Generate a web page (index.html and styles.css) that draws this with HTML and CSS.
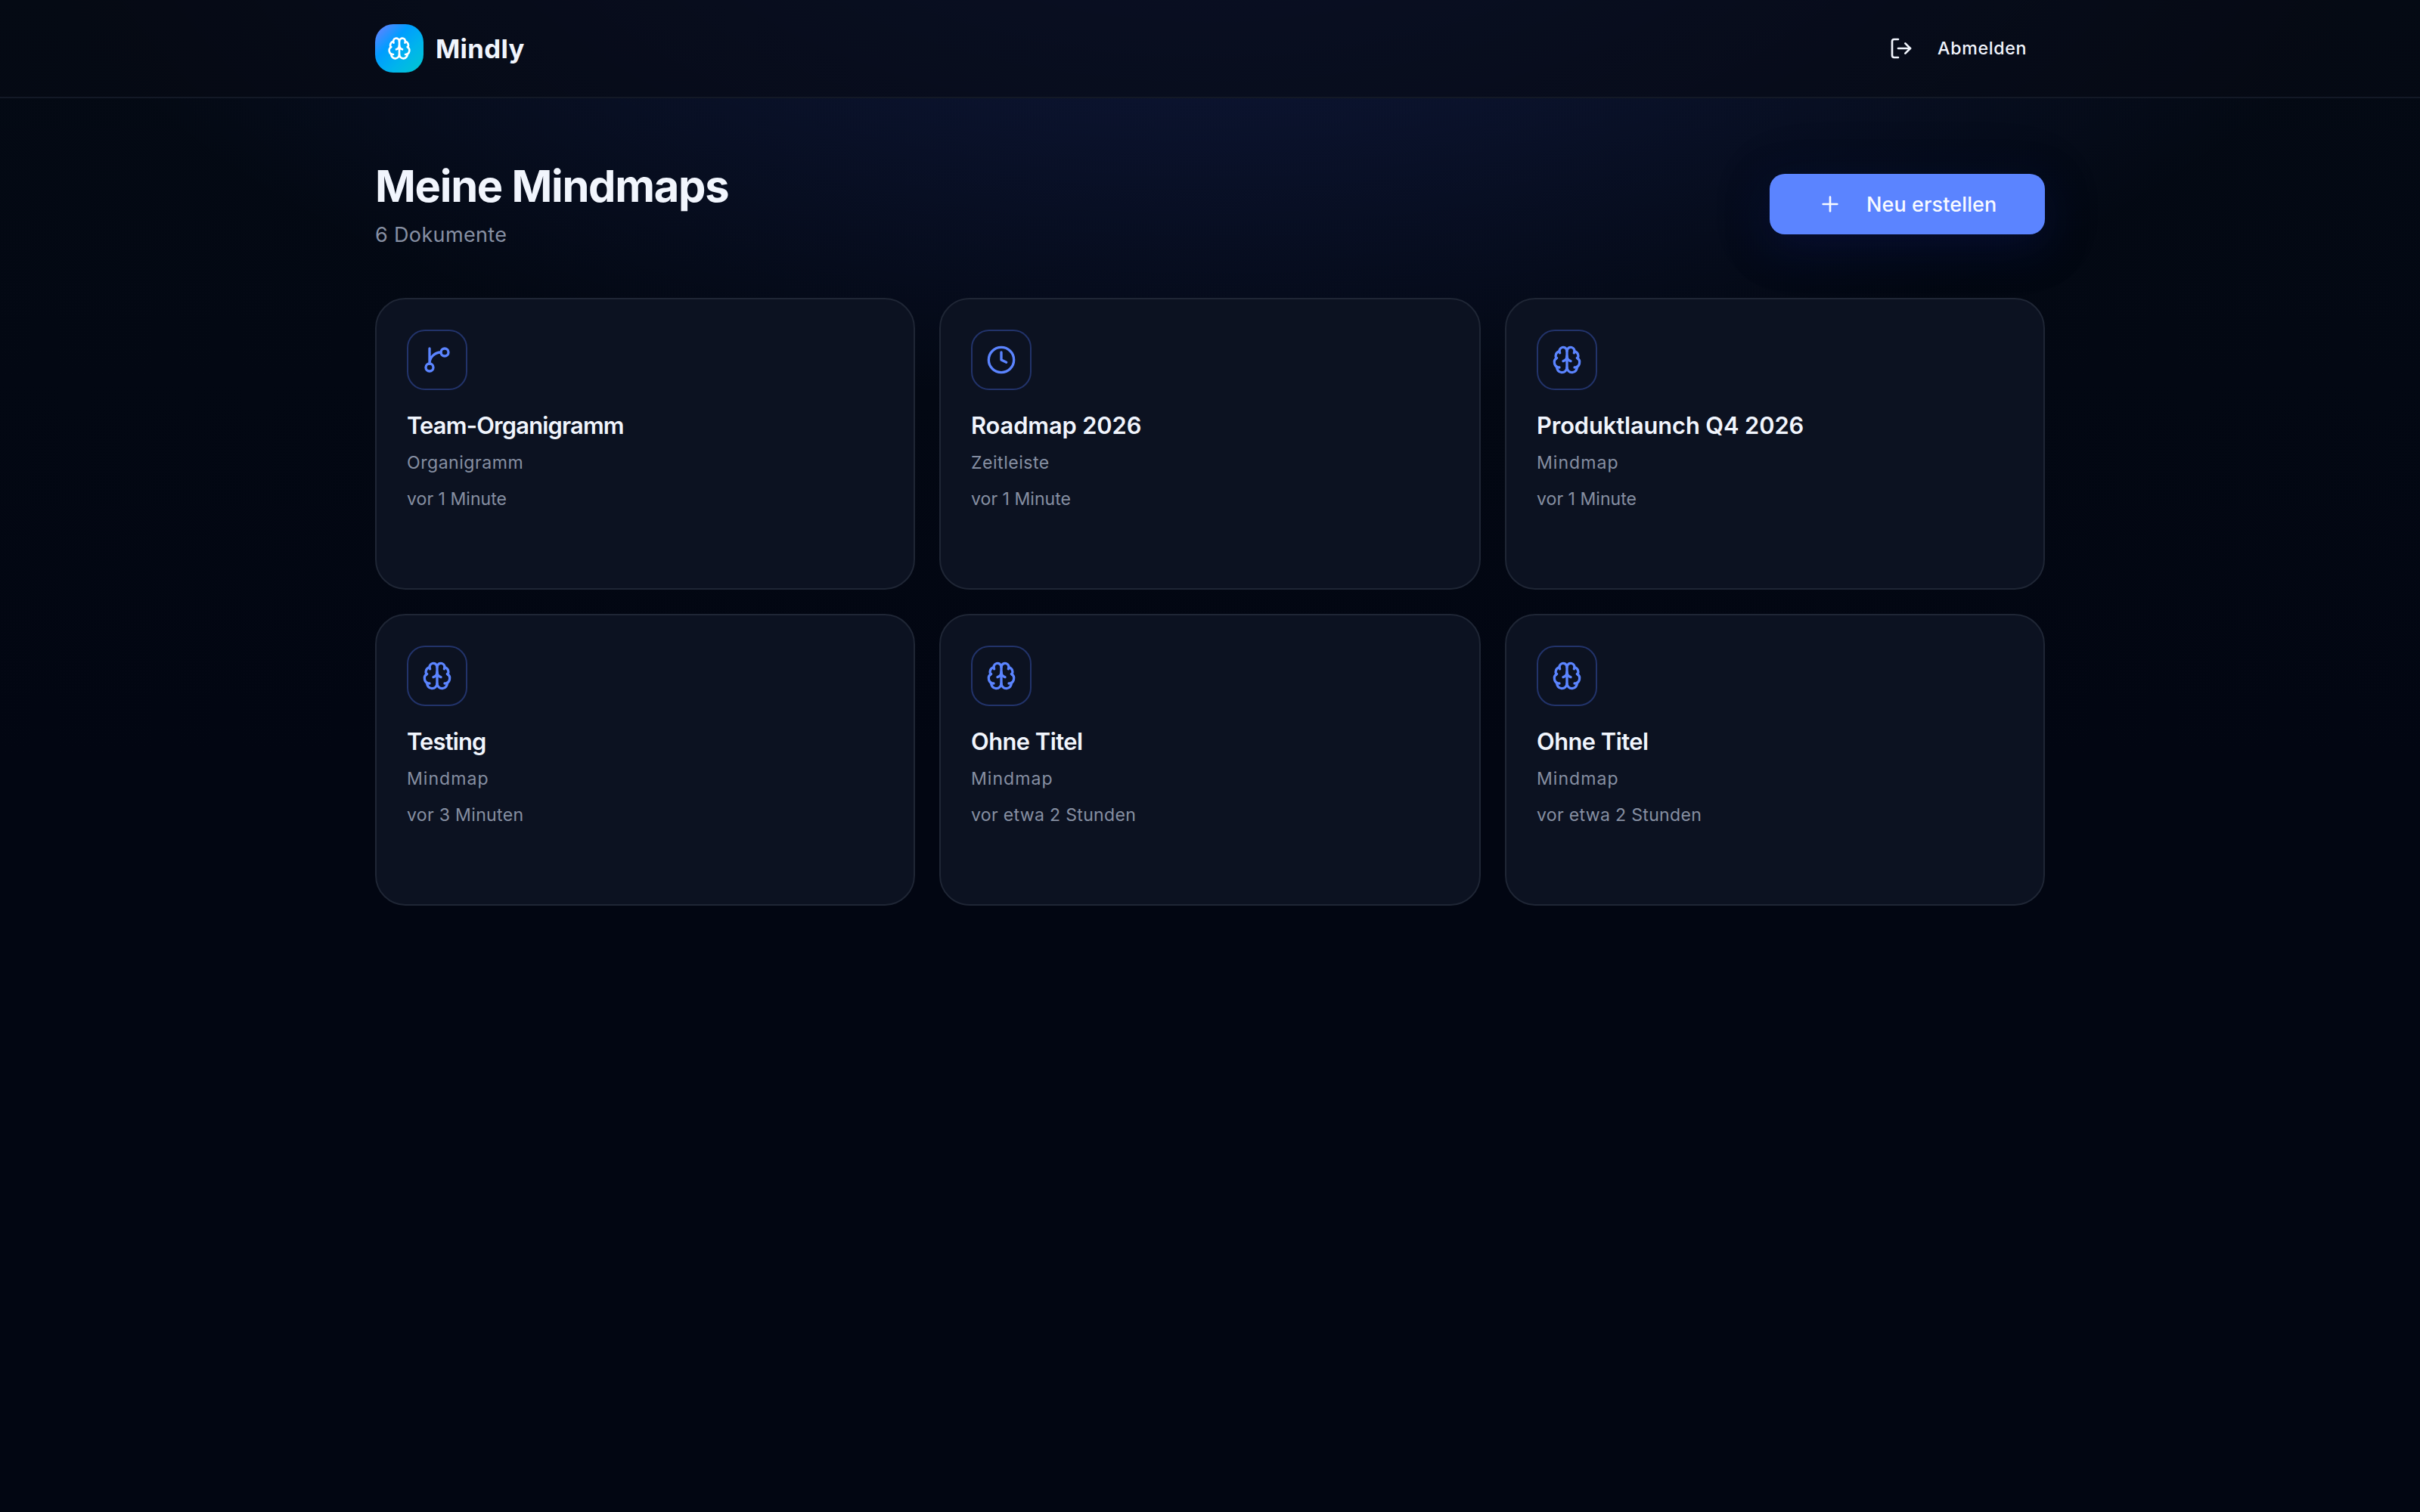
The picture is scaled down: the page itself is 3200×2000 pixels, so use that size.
FILE: index.html
```html
<!DOCTYPE html>
<html lang="de">
<head>
    <meta charset="UTF-8">
    <meta name="viewport" content="width=device-width, initial-scale=1.0">
    <title>Mindly - Meine Mindmaps</title>
    <link rel="stylesheet" href="styles.css">
</head>
<body>
    <!-- Shared icon shapes -->
    <svg class="icon-defs" aria-hidden="true">
        <symbol id="icon-brain" viewBox="0 0 24 24">
            <path d="M12 18V5"/>
            <path d="M15 13a4.17 4.17 0 0 1-3-4 4.17 4.17 0 0 1-3 4"/>
            <path d="M17.598 6.5A3 3 0 1 0 12 5a3 3 0 1 0-5.598 1.5"/>
            <path d="M17.997 5.125a4 4 0 0 1 2.526 5.77"/>
            <path d="M18 18a4 4 0 0 0 2-7.464"/>
            <path d="M19.967 17.483A4 4 0 1 1 12 18a4 4 0 1 1-7.967-.517"/>
            <path d="M6 18a4 4 0 0 1-2-7.464"/>
            <path d="M6.003 5.125a4 4 0 0 0-2.526 5.77"/>
        </symbol>
        <symbol id="icon-branch" viewBox="0 0 24 24">
            <path d="M15 6a9 9 0 0 0-9 9V3"/>
            <circle cx="18" cy="6" r="3"/>
            <circle cx="6" cy="18" r="3"/>
        </symbol>
        <symbol id="icon-clock" viewBox="0 0 24 24">
            <circle cx="12" cy="12" r="10"/>
            <path d="M12 6v6l4 2"/>
        </symbol>
        <symbol id="icon-logout" viewBox="0 0 24 24">
            <path d="M9 21H5a2 2 0 0 1-2-2V5a2 2 0 0 1 2-2h4"/>
            <path d="m16 17 5-5-5-5"/>
            <path d="M21 12H9"/>
        </symbol>
        <symbol id="icon-plus" viewBox="0 0 24 24">
            <path d="M5 12h14"/>
            <path d="M12 5v14"/>
        </symbol>
    </svg>

    <header class="topbar">
        <div class="container topbar-inner">
            <div class="brand">
                <span class="brand-logo"><svg class="icon"><use href="#icon-brain"/></svg></span>
                <span class="brand-name">Mindly</span>
            </div>
            <button class="logout-button">
                <svg class="icon"><use href="#icon-logout"/></svg>
                <span>Abmelden</span>
            </button>
        </div>
    </header>

    <main class="container main">
        <div class="page-head">
            <div>
                <h1>Meine Mindmaps</h1>
                <p class="doc-count">6 Dokumente</p>
            </div>
            <button class="create-button">
                <svg class="icon"><use href="#icon-plus"/></svg>
                <span>Neu erstellen</span>
            </button>
        </div>

        <div class="card-grid">
            <article class="card">
                <div class="card-icon"><svg class="icon"><use href="#icon-branch"/></svg></div>
                <h2 class="tight">Team-Organigramm</h2>
                <p class="card-type">Organigramm</p>
                <p class="card-time tight">vor 1 Minute</p>
            </article>
            <article class="card">
                <div class="card-icon"><svg class="icon"><use href="#icon-clock"/></svg></div>
                <h2>Roadmap 2026</h2>
                <p class="card-type">Zeitleiste</p>
                <p class="card-time tight">vor 1 Minute</p>
            </article>
            <article class="card">
                <div class="card-icon"><svg class="icon"><use href="#icon-brain"/></svg></div>
                <h2>Produktlaunch Q4 2026</h2>
                <p class="card-type wide">Mindmap</p>
                <p class="card-time tight">vor 1 Minute</p>
            </article>
            <article class="card">
                <div class="card-icon"><svg class="icon"><use href="#icon-brain"/></svg></div>
                <h2 class="tight">Testing</h2>
                <p class="card-type wide">Mindmap</p>
                <p class="card-time">vor 3 Minuten</p>
            </article>
            <article class="card">
                <div class="card-icon"><svg class="icon"><use href="#icon-brain"/></svg></div>
                <h2 class="snug">Ohne Titel</h2>
                <p class="card-type wide">Mindmap</p>
                <p class="card-time">vor etwa 2 Stunden</p>
            </article>
            <article class="card">
                <div class="card-icon"><svg class="icon"><use href="#icon-brain"/></svg></div>
                <h2 class="snug">Ohne Titel</h2>
                <p class="card-type wide">Mindmap</p>
                <p class="card-time">vor etwa 2 Stunden</p>
            </article>
        </div>
    </main>
</body>
</html>
```
FILE: styles.css
```css
:root {
    --primary: #5b84ff;
    --text: #f1f5fd;
    --muted: #868fa2;
    --card: #0c1221;
    --border: #1f2635;
}
* {
    box-sizing: border-box;
    margin: 0;
    padding: 0;
}
body {
    min-height: 100vh;
    font-family: Inter, "Liberation Sans", sans-serif;
    color: var(--text);
    background:
        radial-gradient(ellipse 80% 60% at 50% -10%, rgba(70, 95, 255, 0.2), rgba(70, 95, 255, 0) 62%),
        linear-gradient(180deg, #040a14 0%, #020612 50%, #020612 100%);
}
button {
    font-family: inherit;
    color: inherit;
    border: none;
    background: none;
    cursor: pointer;
}
.icon-defs {
    display: none;
}
.icon {
    width: 32px;
    height: 32px;
    flex-shrink: 0;
    fill: none;
    stroke: currentColor;
    stroke-width: 2;
    stroke-linecap: round;
    stroke-linejoin: round;
}
.container {
    width: 2208px;
    margin: 0 auto;
}

/* Header */
.topbar {
    height: 130px;
    border-bottom: 2px solid #131926;
    background: rgba(6, 10, 20, 0.6);
}
.topbar-inner {
    height: 128px;
    display: flex;
    align-items: center;
    justify-content: space-between;
}
.brand {
    display: flex;
    align-items: center;
    gap: 16px;
}
.brand-logo {
    width: 64px;
    height: 64px;
    display: flex;
    align-items: center;
    justify-content: center;
    border-radius: 24px;
    color: #fff;
    background: linear-gradient(135deg, #5b84ff 8%, #009dff 36%, #00b4ec 65%, #00c8cf 100%);
}
.brand-name {
    font-size: 34.7px;
    line-height: 48px;
    font-weight: 700;
    letter-spacing: 0.3px;
}
.logout-button {
    display: flex;
    align-items: center;
    gap: 32px;
    padding: 16px 24px;
    font-size: 23.2px;
    line-height: 32px;
    font-weight: 450;
    letter-spacing: 0.65px;
}

/* Page heading */
.main {
    padding: 80px 0;
}
.page-head {
    display: flex;
    align-items: center;
    justify-content: space-between;
    margin-bottom: 64px;
}
h1 {
    font-size: 57.8px;
    line-height: 72px;
    font-weight: 700;
    letter-spacing: -1.27px;
}
.doc-count {
    margin-top: 8px;
    padding-top: 1px;
    font-size: 27px;
    line-height: 39px;
    letter-spacing: 0.35px;
    color: var(--muted);
}
.create-button {
    width: 364px;
    height: 80px;
    display: flex;
    align-items: center;
    gap: 32px;
    padding-left: 64px;
    white-space: nowrap;
    border-radius: 20px;
    font-size: 27px;
    font-weight: 450;
    letter-spacing: 0.1px;
    color: #f8faff;
    background: var(--primary);
    box-shadow: 0 16px 56px rgba(12, 24, 100, 0.35), 0 8px 80px rgba(0, 0, 0, 0.18);
}

/* Cards */
.card-grid {
    display: grid;
    grid-template-columns: 714px 716px 714px;
    grid-auto-rows: 386px;
    gap: 32px;
}
.card {
    padding: 40px;
    border: 2px solid var(--border);
    border-radius: 40px;
    background: var(--card);
}
.card-icon {
    width: 80px;
    height: 80px;
    display: flex;
    align-items: center;
    justify-content: center;
    border: 2px solid #22336a;
    border-radius: 24px;
    color: var(--primary);
}
.card-icon .icon {
    width: 40px;
    height: 40px;
}
.card h2 {
    margin-top: 24px;
    font-size: 30.8px;
    line-height: 46px;
    font-weight: 600;
    letter-spacing: -0.1px;
}
.card h2.snug {
    letter-spacing: -0.5px;
}
.card h2.tight {
    letter-spacing: -0.8px;
}
.card-type,
.card-time {
    font-size: 23.1px;
    line-height: 32px;
    letter-spacing: 0.3px;
    color: var(--muted);
}
.card-type {
    margin-top: 10px;
    letter-spacing: 0.5px;
}
.card-type.wide {
    letter-spacing: 1px;
}
.card-time {
    margin-top: 16px;
}
.card-time.tight {
    letter-spacing: 0;
}
```
